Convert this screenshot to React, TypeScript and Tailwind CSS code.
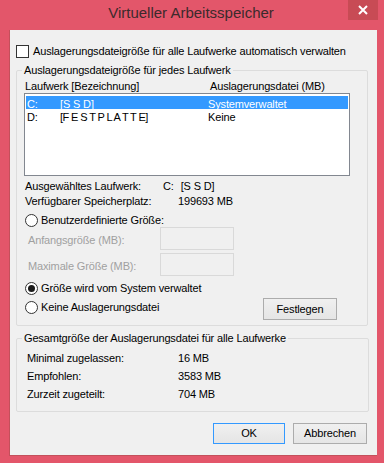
import React from "react";

const font = { fontFamily: '"Liberation Sans", Arial, sans-serif' };

function Radio({ checked }: { checked?: boolean }) {
  return (
    <span className="flex h-[13px] w-[13px] shrink-0 items-center justify-center rounded-full border border-[#333] bg-white">
      {checked && <span className="h-[7px] w-[7px] rounded-full bg-[#1a1a1a]" />}
    </span>
  );
}

function Button({ label, primary }: { label: string; primary?: boolean }) {
  return (
    <button
      className={
        "flex h-[21px] items-center justify-center bg-gradient-to-b from-[#f0f0f0] to-[#e5e5e5] text-[11px] text-black " +
        (primary ? "w-[72px] border border-[#3399ff]" : "w-[74px] border border-[#acacac]")
      }
    >
      {label}
    </button>
  );
}

export default function App() {
  return (
    <div className="flex h-[463px] w-[384px] flex-col bg-[#e3566a] tracking-[-0.15px]" style={font}>
      {/* title bar */}
      <div className="relative flex h-[30px] shrink-0 items-center justify-center pb-[3px] pr-[2px]">
        <span className="text-[15px] tracking-normal text-[#3b2a2c]">Virtueller Arbeitsspeicher</span>
        <div className="absolute right-[6px] top-0 flex h-[20px] w-[30px] items-center justify-center bg-[#c84b55]">
          <svg width="10" height="10" viewBox="0 0 10 10">
            <path d="M1 1 L9 9 M9 1 L1 9" stroke="#fff" strokeWidth="2" />
          </svg>
        </div>
      </div>

      {/* client area */}
      <div className="ml-[9px] flex h-[426px] w-[368px] flex-col border-b border-l border-[#c3505b] bg-[#f0f0f0] text-[11px] text-black">
        <div className="mt-[14px] flex h-[14px] items-center gap-[4px] pl-[6px]">
          <span className="h-[13px] w-[13px] border border-[#333] bg-white" />
          <span>Auslagerungsdateigröße für alle Laufwerke automatisch verwalten</span>
        </div>

        {/* group 1 */}
        <fieldset className="ml-[6px] mt-[5px] h-[263px] w-[352px] rounded-[2px] border border-[#dcdcdc]">
          <legend className="ml-[5px] px-[2px] leading-[14px]">Auslagerungsdateigröße für jedes Laufwerk</legend>

          <div className="mt-[1px] grid h-[14px] grid-cols-[185px_1fr] items-center pl-[8px]">
            <span>Laufwerk [Bezeichnung]</span>
            <span>Auslagerungsdatei (MB)</span>
          </div>

          <div className="ml-[7px] mt-[1px] h-[83px] w-[326px] border border-[#828790] bg-white px-[1px] pt-[2px]">
            <div className="grid h-[13px] grid-cols-[33px_148px_1fr] items-center bg-[#3399ff] pl-[1px] text-white">
              <span>C:</span>
              <span>[S S D]</span>
              <span>Systemverwaltet</span>
            </div>
            <div className="grid h-[13px] grid-cols-[33px_148px_1fr] items-center pl-[1px]">
              <span>D:</span>
              <span className="tracking-[-0.6px]">[F E S T P L A T T E]</span>
              <span>Keine</span>
            </div>
          </div>

          <div className="mt-[2px] grid h-[15px] grid-cols-[138px_1fr] items-center pl-[8px]">
            <span>Ausgewähltes Laufwerk:</span>
            <span className="flex gap-[7px]">
              <span>C:</span>
              <span>[S S D]</span>
            </span>
          </div>
          <div className="grid h-[15px] grid-cols-[153px_1fr] items-center pl-[8px]">
            <span>Verfügbarer Speicherplatz:</span>
            <span>199693 MB</span>
          </div>

          <div className="mt-[6px] flex h-[13px] items-center gap-[3px] pl-[8px]">
            <Radio />
            <span>Benutzerdefinierte Größe:</span>
          </div>

          <div className="flex h-[23px] items-center pl-[11px]">
            <span className="w-[132px] pt-[3px] text-[#a0a0a0]">Anfangsgröße (MB):</span>
            <span className="h-[23px] w-[74px] border border-[#d9d9d9] bg-[#f0f0f0]" />
          </div>
          <div className="mt-[3px] flex h-[23px] items-center pl-[11px]">
            <span className="w-[132px] pt-[3px] text-[#a0a0a0]">Maximale Größe (MB):</span>
            <span className="h-[23px] w-[74px] border border-[#d9d9d9] bg-[#f0f0f0]" />
          </div>

          <div className="mt-[5px] flex h-[14px] items-center gap-[3px] pl-[8px]">
            <Radio checked />
            <span>Größe wird vom System verwaltet</span>
          </div>

          <div className="mt-[2px] flex h-[23px] items-start pl-[8px]">
            <div className="mt-[3px] flex h-[14px] items-center gap-[3px]">
              <Radio />
              <span>Keine Auslagerungsdatei</span>
            </div>
            <button className="ml-auto mr-[30px] mt-[1px] flex h-[22px] w-[74px] items-center justify-center border border-[#acacac] bg-gradient-to-b from-[#f0f0f0] to-[#e5e5e5]">
              Festlegen
            </button>
          </div>
        </fieldset>

        {/* group 2 */}
        <fieldset className="ml-[6px] mt-[5px] h-[81px] w-[353px] rounded-[2px] border border-[#dcdcdc]">
          <legend className="ml-[5px] px-[2px] leading-[14px]">Gesamtgröße der Auslagerungsdatei für alle Laufwerke</legend>
          <div className="mt-[4px] flex flex-col pl-[10px]">
            <div className="grid h-[18px] grid-cols-[151px_1fr] items-center">
              <span>Minimal zugelassen:</span>
              <span>16 MB</span>
            </div>
            <div className="grid h-[18px] grid-cols-[151px_1fr] items-center">
              <span>Empfohlen:</span>
              <span>3583 MB</span>
            </div>
            <div className="grid h-[18px] grid-cols-[151px_1fr] items-center">
              <span>Zurzeit zugeteilt:</span>
              <span>704 MB</span>
            </div>
          </div>
        </fieldset>

        <div className="mt-[11px] flex justify-end gap-[8px] pr-[10px]">
          <Button label="OK" primary />
          <Button label="Abbrechen" />
        </div>
      </div>
    </div>
  );
}
